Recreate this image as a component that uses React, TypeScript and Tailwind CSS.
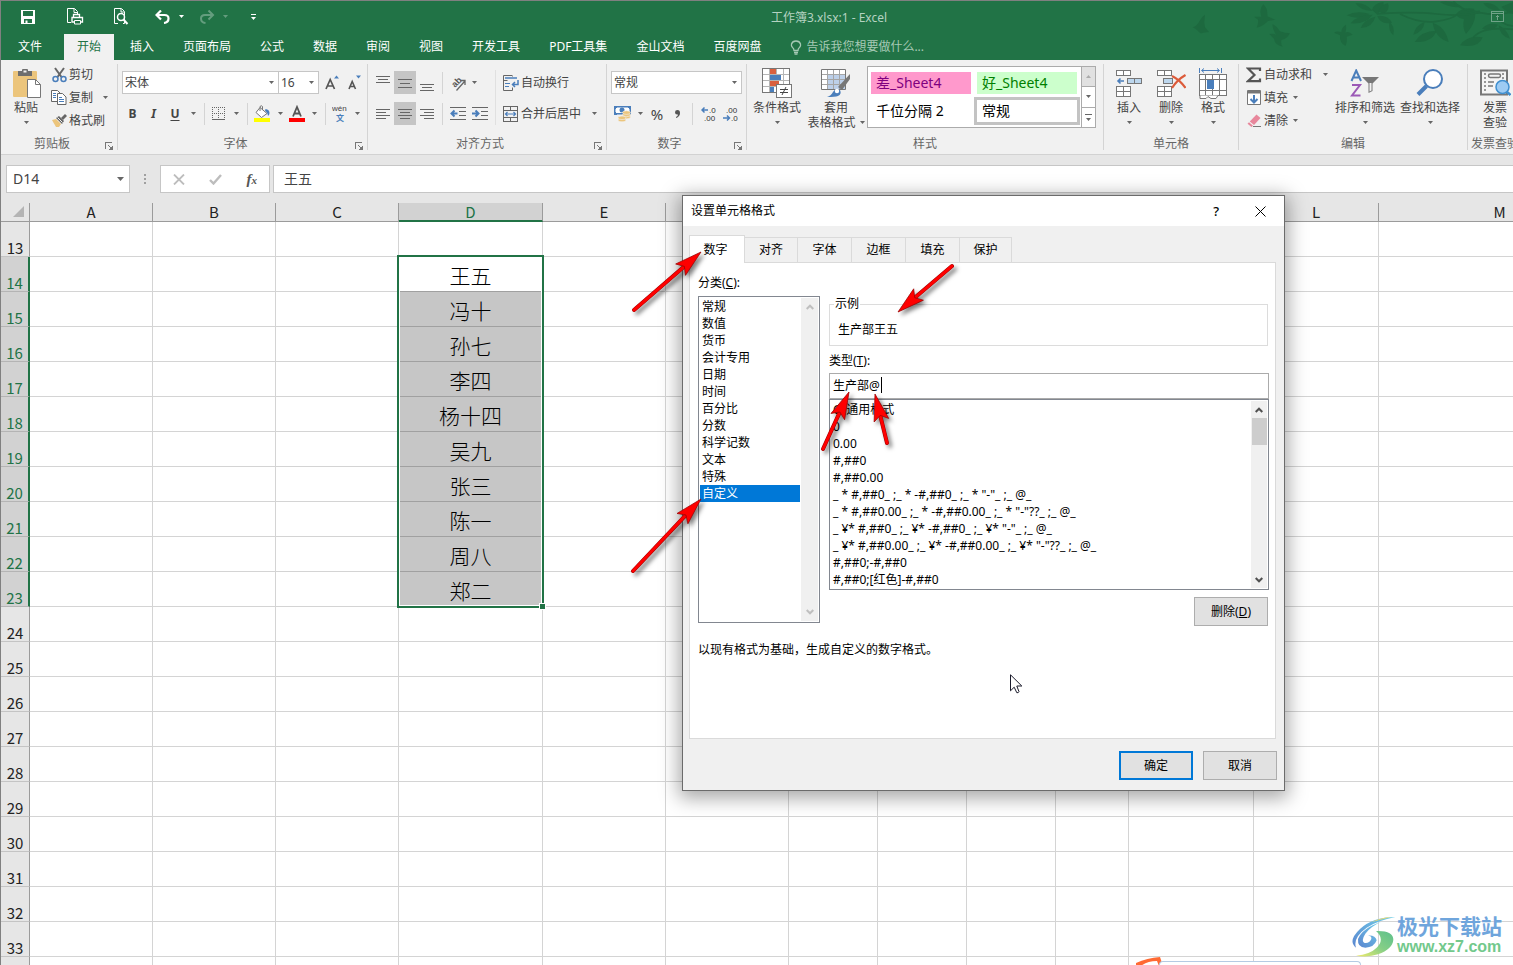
import React, { useState } from 'react';

const tabs = ['插入', '页面布局', '公式', '数据', '审阅', '视图', '开发工具', 'PDF工具集', '金山文档', '百度网盘'];

const columns = [
  { name: 'A', width: 'w-[123px]' },
  { name: 'B', width: 'w-[123px]' },
  { name: 'C', width: 'w-[123px]' },
  { name: 'D', width: 'w-[144px]' },
  { name: 'E', width: 'w-[123px]' },
  { name: 'F', width: 'w-[123px]' },
  { name: 'G', width: 'w-[89px]' },
  { name: 'H', width: 'w-[89px]' },
  { name: 'I', width: 'w-[89px]' },
  { name: 'J', width: 'w-[73px]' },
  { name: 'K', width: 'w-[125px]' },
  { name: 'L', width: 'w-[125px]' },
  { name: 'M', width: 'w-[242px]' },
];

const names: Record<number, string> = {
  14: '王五',
  15: '冯十',
  16: '孙七',
  17: '李四',
  18: '杨十四',
  19: '吴九',
  20: '张三',
  21: '陈一',
  22: '周八',
  23: '郑二',
};

const rows = Array.from({ length: 22 }, (_, i) => i + 13);

const categories = ['常规', '数值', '货币', '会计专用', '日期', '时间', '百分比', '分数', '科学记数', '文本', '特殊', '自定义'];

const formats = [
  'G/通用格式',
  '0',
  '0.00',
  '#,##0',
  '#,##0.00',
  '_ * #,##0_ ;_ * -#,##0_ ;_ * "-"_ ;_ @_ ',
  '_ * #,##0.00_ ;_ * -#,##0.00_ ;_ * "-"??_ ;_ @_ ',
  '_ ¥* #,##0_ ;_ ¥* -#,##0_ ;_ ¥* "-"_ ;_ @_ ',
  '_ ¥* #,##0.00_ ;_ ¥* -#,##0.00_ ;_ ¥* "-"??_ ;_ @_ ',
  '#,##0;-#,##0',
  '#,##0;[红色]-#,##0',
];

/* ---------- small shared pieces ---------- */

const Caret = ({ className = 'text-[#666]' }: { className?: string }) => (
  <svg width="5" height="3" viewBox="0 0 5 3" className={`shrink-0 ${className}`}>
    <path d="M0 0h5L2.5 3z" fill="currentColor" />
  </svg>
);

const CaretButton = ({ label }: { label: string }) => (
  <button aria-label={label} className="flex h-full w-[14px] shrink-0 items-center justify-center">
    <Caret />
  </button>
);

const Divider = ({ className = 'mx-[5px]' }: { className?: string }) => (
  <div className={`h-[22px] w-px shrink-0 bg-[#d4d4d4] ${className}`} />
);

interface GroupProps {
  label: string;
  width: string;
  launcher?: boolean;
  children: React.ReactNode;
}

const Group = ({ label, width, launcher, children }: GroupProps) => (
  <>
    <section aria-label={label} className={`flex shrink-0 flex-col ${width}`}>
      <div className="flex h-[72px] items-start">{children}</div>
      <div className="flex h-[22px] items-center pt-px text-[#666]">
        <span className="flex-1 whitespace-nowrap text-center">{label}</span>
        {launcher && (
          <button aria-label={`${label}设置`} className="flex h-full w-[14px] items-center pl-[2px] pt-1">
            <svg width="8" height="8" viewBox="0 0 8 8" fill="none" stroke="#777" shapeRendering="crispEdges">
              <path d="M.5 7V.5H7M3 3l3 3" />
              <path d="M3.500 7.500h4v-4M5 6.500h2M6.500 5v2" />
            </svg>
          </button>
        )}
      </div>
    </section>
    <div className="my-1 w-px shrink-0 self-stretch bg-[#d4d4d4]" />
  </>
);

interface BigButtonProps {
  icon: React.ReactNode;
  lines: string[];
  width: string;
  inlineCaret?: boolean;
  noCaret?: boolean;
}

const BigButton = ({ icon, lines, width, inlineCaret, noCaret }: BigButtonProps) => (
  <button className={`flex shrink-0 flex-col items-center pt-[7px] ${width}`}>
    <span className="mb-px flex h-8 items-center justify-center">{icon}</span>
    {lines.map((line, i) => (
      <span key={line} className="flex items-center gap-1 whitespace-nowrap leading-[15px]">
        {line}
        {inlineCaret && i === lines.length - 1 && <Caret />}
      </span>
    ))}
    {!inlineCaret && !noCaret && (
      <span className="flex h-[15px] items-center pl-px">
        <Caret />
      </span>
    )}
  </button>
);

const SmallButton = ({ icon, label }: { icon: React.ReactNode; label: string }) => (
  <button className="flex h-[23px] items-center gap-[2px] whitespace-nowrap">
    <span className="flex w-4 justify-center">{icon}</span>
    {label}
  </button>
);

interface IconButtonProps {
  label: string;
  width?: string;
  active?: boolean;
  children: React.ReactNode;
}

const IconButton = ({ label, width = 'w-[22px]', active, children }: IconButtonProps) => (
  <button
    aria-label={label}
    className={`flex h-[23px] shrink-0 items-center justify-center ${width} ${active ? 'bg-[#c5c5c5]' : ''}`}
  >
    {children}
  </button>
);

/* ---------- ribbon icons ---------- */

const PasteIcon = () => (
  <svg width="32" height="30" viewBox="-2 0 32 30">
    <rect x="1" y="3" width="24" height="26" rx="1" fill="#ecc57c" />
    <path d="M6 3h4V2q0-1 1-1h4q1 0 1 1v1h4v5H6z" fill="#6e6e6e" />
    <rect x="11.500" y="2.500" width="3" height="2" fill="#f1f1f1" />
    <path d="M15.500 11.500h8l5 5v13h-13z" fill="#fff" stroke="#777" />
    <path d="M23.500 11.500v5h5" fill="none" stroke="#777" />
  </svg>
);

const CutIcon = () => (
  <svg width="15" height="16" viewBox="0 0 15 16" fill="none">
    <path d="M3 1l6.500 9M12 1L5.500 10" stroke="#666" strokeWidth="2" />
    <circle cx="3.500" cy="12" r="2.500" stroke="#4a7ebb" strokeWidth="1.500" />
    <circle cx="11.500" cy="12" r="2.500" stroke="#4a7ebb" strokeWidth="1.500" />
  </svg>
);

const CopyIcon = () => (
  <svg width="16" height="15" viewBox="0 0 16 15" fill="#fff" stroke="#666">
    <path d="M.5.5h6l3 3v8h-9z" />
    <path d="M2 3.500h3M2 5.500h3M2 7.500h3" stroke="#4a7ebb" />
    <path d="M6.500 3.500h5l3.500 3.500v7.500H6.500z" />
    <path d="M8 7.500h3M8 9.500h5M8 11.500h5" stroke="#4a7ebb" />
  </svg>
);

const BrushIcon = () => (
  <svg width="16" height="15" viewBox="0 0 16 15">
    <path d="M1 7l4-1 5 5-2 3H5z" fill="#ecc57c" />
    <path d="M5 5l3-2 5 5-2 3z" fill="#666" />
    <path d="M10 5l4-4 2 2-4 4z" fill="#666" />
    <path d="M6.500 4.500l5 5" stroke="#f1f1f1" />
  </svg>
);

const BordersIcon = () => (
  <svg width="14" height="14" viewBox="0 0 14 14" stroke="#666" fill="none" shapeRendering="crispEdges">
    <path d="M.5 0v12M6.500 0v12M12.500 0v12M0 .5h13M0 6.500h13" strokeDasharray="1 1" />
    <path d="M0 12.500h13" />
  </svg>
);

const FillIcon = () => (
  <svg width="17" height="17" viewBox="0 0 17 17">
    <path d="M6 2.500l7 6-5.500 4L2 7.500z" fill="#fff" stroke="#777" />
    <path d="M6 6V1.500q1.500-1.500 2.500 0V5" fill="none" stroke="#777" />
    <path d="M11.500 4q4 .5 4 4 0 2-1.500 3-.5-4-3-5z" fill="#4a7ebb" />
    <rect y="13" width="16" height="4" fill="#ff0" />
  </svg>
);

const PhoneticIcon = () => (
  <svg width="16" height="21" viewBox="0 0 16 21">
    <text x="0" y="8" fontSize="8" fill="#444" fontFamily="Liberation Sans, sans-serif">wén</text>
    <text x="4" y="18" fontSize="8" fill="#4a7ebb" fontWeight="700" fontFamily="Noto Sans CJK SC, sans-serif">文</text>
  </svg>
);

const linePaths: Record<string, string> = {
  top: 'M0 1.500h14M2 4.500h10M0 7.500h14',
  middle: 'M0 4.500h14M2 8.500h10M0 12.500h14',
  bottom: 'M0 9.500h14M2 12.500h10M0 15.500h14',
  left: 'M0 3.500h14M0 6.500h10M0 9.500h14M0 12.500h10',
  center: 'M0 3.500h14M2 6.500h10M0 9.500h14M2 12.500h10',
  right: 'M0 3.500h14M4 6.500h10M0 9.500h14M4 12.500h10',
};

const LinesIcon = ({ kind }: { kind: string }) => (
  <svg width="14" height="16" viewBox="0 0 14 16" stroke="#666" shapeRendering="crispEdges">
    <path d={linePaths[kind]} />
  </svg>
);

const IndentIcon = ({ increase }: { increase?: boolean }) => (
  <svg width="16" height="14" viewBox="0 0 16 14" fill="none">
    <path d="M0 .5h16M9 4.500h7M9 8.500h7M0 12.500h16" stroke="#666" shapeRendering="crispEdges" />
    <path d={increase ? 'M0 6.500h6M3.500 3.500l3 3-3 3' : 'M1.500 6.500H7.500M4.500 3.500l-3 3 3 3'} stroke="#4a7ebb" strokeWidth="2" />
  </svg>
);

const OrientationIcon = () => (
  <svg width="17" height="16" viewBox="0 0 17 16">
    <text x="6" y="13" fontSize="9" fontWeight="700" fill="#555" transform="rotate(-45 6 13)" fontFamily="Liberation Sans, sans-serif">ab</text>
    <path d="M7.500 15.500l8-9M11.500 5.500h4.500V10" fill="none" stroke="#666" strokeWidth="1.300" />
  </svg>
);

const WrapIcon = () => (
  <svg width="16" height="16" viewBox="0 0 16 16" fill="none">
    <path d="M9 .5H.5v15h9v-3M9.500.5v1M.5 5.500h4" stroke="#666" />
    <path d="M2 3h12" stroke="#4a7ebb" strokeWidth="1.500" />
    <path d="M2 8.500h5M2 11.500h4" stroke="#4a7ebb" />
    <path d="M15 5v4.500H9.500M12 7l-2.500 2.500L12 12" stroke="#4a7ebb" strokeWidth="1.500" />
  </svg>
);

const MergeIcon = () => (
  <svg width="16" height="16" viewBox="0 0 16 16" fill="none">
    <path d="M.5.5h14v15H.5zM.5 4.500h14M.5 11.500h14M7.500.5v4M7.500 11.500v4" stroke="#666" shapeRendering="crispEdges" />
    <path d="M2.500 8h10M4.500 6l-2 2 2 2M10.500 6l2 2-2 2" stroke="#4a7ebb" strokeWidth="1.200" />
  </svg>
);

const CurrencyIcon = () => (
  <svg width="17" height="17" viewBox="0 0 17 17">
    <path d="M.75 1.750h15.500v7H.75z" fill="#fff" stroke="#4a7ebb" strokeWidth="1.500" />
    <circle cx="8" cy="5" r="2.500" fill="#4a7ebb" />
    <path d="M0 1h3v2H2v1H0zM14 1h3v3h-2V3h-1zM0 7h2v1h1v2H0z" fill="#4a7ebb" />
    <g fill="#ecc57c" stroke="#f1f1f1" strokeWidth=".6">
      <ellipse cx="12.500" cy="12" rx="4" ry="1.800" />
      <ellipse cx="12.500" cy="9.800" rx="4" ry="1.800" />
      <ellipse cx="12.500" cy="7.600" rx="4" ry="1.800" />
      <ellipse cx="8" cy="15" rx="4" ry="1.800" />
      <ellipse cx="8" cy="12.800" rx="4" ry="1.800" />
    </g>
  </svg>
);

const DecimalIcon = ({ decrease }: { decrease?: boolean }) => (
  <svg width="16" height="18" viewBox="0 0 16 18" fontFamily="Liberation Sans, sans-serif" fontSize="8" fill="#333">
    <text x={decrease ? 3 : 8} y="8">{decrease ? '.00' : '.0'}</text>
    <text x={decrease ? 8 : 3} y="16">{decrease ? '.0' : '.00'}</text>
    <path
      d={decrease ? 'M0 13h6M4 10.500L6.500 13 4 15.500' : 'M1 5h6M3.500 2.500L1 5l2.500 2.500'}
      fill="none"
      stroke="#4a7ebb"
      strokeWidth="1.500"
    />
  </svg>
);

const ConditionalIcon = () => (
  <svg width="30" height="30" viewBox="0 0 30 30" shapeRendering="crispEdges">
    <path d="M.5.5h27v24H.5z" fill="#fff" stroke="#777" />
    <path d="M7.500 1v23M14.500 1v23M21.500 1v23M1 6.500h26M1 12.500h26M1 18.500h26" stroke="#b5b5b5" />
    <rect x="8" y="1" width="6" height="5" fill="#d9603f" />
    <rect x="8" y="7" width="11" height="5" fill="#4a7ebb" />
    <rect x="8" y="13" width="9" height="5" fill="#d9603f" />
    <rect x="8" y="19" width="4" height="5" fill="#4a7ebb" />
    <path d="M14.500 16.500h15v13h-15z" fill="#fff" stroke="#777" />
    <path d="M18 21.500h8M18 24.500h8M24 19l-4 8" stroke="#444" shapeRendering="auto" />
  </svg>
);

const TableFormatIcon = () => (
  <svg width="30" height="28" viewBox="0 0 30 28">
    <path d="M.5.5h24v20H.5z" fill="#fff" stroke="#777" />
    <rect x="7" y="6" width="17" height="14" fill="#bdd0e9" />
    <path d="M6.500 1v19M12.500 1v19M18.500 1v19M1 5.500h23M1 10.500h23M1 15.500h23" stroke="#a5a5a5" />
    <path d="M29 5v5l-8 11-4-3z" fill="#777" />
    <path d="M6 28q4-1 6-5 3-5 7-2 2 4-2 6-3 1-11 1z" fill="#4a7ebb" />
    <circle cx="16" cy="22" r="2.200" fill="#fff" />
  </svg>
);

const InsertIcon = () => (
  <svg width="28" height="28" viewBox="0 0 28 28" fill="#fff" stroke="#777" shapeRendering="crispEdges">
    <path d="M1.500 1.500h14v5h-14zM8.500 1.500v5M1.500 17.500h14v10h-14zM8.500 17.500v10M1.500 22.500h14" />
    <path d="M12.500 9.500h14v5h-14zM19.500 9.500v5" fill="#bdd7ee" />
    <path d="M3 12h6M5.500 9.500L3 12l2.500 2.500" fill="none" stroke="#4a7ebb" strokeWidth="1.600" shapeRendering="auto" />
  </svg>
);

const DeleteIcon = () => (
  <svg width="30" height="28" viewBox="-1 0 30 28" fill="#fff" stroke="#777" shapeRendering="crispEdges">
    <path d="M.5 1.500h14v5H.5zM7.500 1.500v5M.5 17.500h14v10H.5zM7.500 17.500v10M.5 22.500h14" />
    <path d="M6.500 9.500h9v5h-9z" fill="#bdd7ee" />
    <path d="M15 7q8 4 13.500 12M28.500 6Q20 11 15 19" fill="none" stroke="#dc5b3a" strokeWidth="2.200" shapeRendering="auto" />
  </svg>
);

const FormatIcon = () => (
  <svg width="28" height="31" viewBox="0 0 28 31" fill="#fff" stroke="#777" shapeRendering="crispEdges">
    <path d="M.5 6.500h27v21H.5zM6.500 6.500v21M13.500 6.500v21M20.500 6.500v21M.5 11.500h27M.5 22.500h27" />
    <rect x="8" y="12" width="7" height="9" fill="#4a7ebb" stroke="none" />
    <path d="M.5 0v5M22.500 0v5" stroke="#4a7ebb" />
    <path d="M3 2.500h17M5 .5l-2.500 2L5 4.500M18 .5l2.500 2-2.500 2" fill="none" stroke="#4a7ebb" shapeRendering="auto" />
    <path d="M1 27.500v3h6l2-2 3 2h5l2-3" shapeRendering="auto" />
  </svg>
);

const SigmaIcon = () => (
  <svg width="16" height="16" viewBox="0 0 16 16" fill="none" stroke="#555" strokeWidth="2.200">
    <path d="M14 4V1.500H2L8.500 8 2 14.200h12V11.500" />
  </svg>
);

const FillDownIcon = () => (
  <svg width="14" height="15" viewBox="0 0 14 15" fill="none">
    <path d="M.5.5h13v14H.5z" fill="#fff" stroke="#777" />
    <path d="M1 2h12" stroke="#777" strokeWidth="3" />
    <path d="M7 5v7.500M3.500 9L7 12.500 10.500 9" stroke="#4a7ebb" strokeWidth="2" />
  </svg>
);

const EraserIcon = () => (
  <svg width="15" height="14" viewBox="0 0 15 14">
    <path d="M9.500.5L13.500 4 7 11 2.800 7.500z" fill="#e8879c" />
    <path d="M2 8.300l4 3.500L4.500 13 .5 9.800z" fill="#e8879c" />
    <path d="M6 12.500h8" stroke="#777" />
  </svg>
);

const SortIcon = () => (
  <svg width="30" height="28" viewBox="0 0 30 28" fill="none">
    <path d="M1.500 12L6.200 1.500 11 12M3 8.500h6.500" stroke="#4a7ebb" strokeWidth="2" />
    <path d="M2 16h8L2 26.500h8.500" stroke="#9b59b6" strokeWidth="2" />
    <path d="M12 8h17l-6.500 6.500V22l-4 2v-9.500z" fill="#777" />
    <path d="M19.500 14h2v7.500l-2 1z" fill="#f1f1f1" />
  </svg>
);

const SearchIcon = () => (
  <svg width="28" height="28" viewBox="0 0 28 28" stroke="#4a7ebb">
    <path d="M10.500 17L2 25.500" strokeWidth="4" />
    <circle cx="17" cy="10" r="9" fill="#fff" strokeWidth="2" />
  </svg>
);

const InvoiceIcon = () => (
  <svg width="31" height="28" viewBox="0 0 31 28" fill="none">
    <path d="M1 1.500h26v24H1z" stroke="#777" strokeWidth="2" fill="#f4f4f4" />
    <path d="M5 4v20M23 4v8" stroke="#777" strokeWidth="1.500" strokeDasharray="2 2" />
    <rect x="8.500" y="5" width="12" height="3.500" rx="1.700" stroke="#777" strokeWidth="1.500" />
    <path d="M8 13h6M8 17h5" stroke="#777" strokeWidth="1.500" />
    <circle cx="22.500" cy="18" r="6.500" fill="#9dcbf3" stroke="#3f8fd0" strokeWidth="1.500" />
    <path d="M27 23l3.500 3" stroke="#3f8fd0" strokeWidth="2.500" />
  </svg>
);

/* ---------- title bar ---------- */

const TitleArt = () => (
  <svg
    className="pointer-events-none absolute right-0 top-0 text-[#1d693f]"
    width="323"
    height="60"
    viewBox="270 3 969 180"
    fill="currentColor"
    stroke="currentColor"
  >
    <g stroke="none">
      <path d="M278 82q14-4 20-18 6-14 17-20-4 22 0 38l12 14-18 2q-8 4-12-2-10-10-19-14z" />
      <path d="M462 50l22 0q-8-24 6-37 14 12 12 36l24 10-22 4q-14 16-34 20 6-14 4-24z" />
      <path d="M508 102q14-2 20 2-12-20-10-32 12 6 22 22 14 6 30 6-10 18-26 20-2 14 4 20-24-6-26-24z" />
      <path d="M702 98q8-6 22-2 0-14 14-22 2 16-2 24 10-6 22 6l-18 6q2 18-4 28-18-10-16-32z" />
      <path d="M766 10q30-4 52 22-34 2-52-22z" />
      <path d="M740 46q30-16 70-4-34 20-70 4z" />
      <path d="M752 70q20-26 66-26-22 30-66 26z" />
      <path d="M782 84q10-26 44-34-8 32-44 34z" />
      <path d="M816 30q4-20 34-24 6 24-20 36z" />
      <path d="M836 34q6-20 28-24 8 20-14 32z" />
      <path d="M832 48q30-4 44 20-34 8-44-20z" />
      <path d="M868 66q18 12 12 40-16-14-12-40z" />
      <path d="M944 126q20-34 66-34-14 36-66 34z" />
      <path d="M998 68q38 12 48 58-42-14-48-58z" />
      <path d="M974 66q-4 30-34 38 6-28 34-38z" />
      <path d="M1066 44q20-24 56-18 14 32-24 76-12-20-6-44-16-4-26-14z" />
      <path d="M1020 6q30-8 66 14-36 6-66-14z" />
      <path d="M1080 136q22-32 68-24-12 34-68 24z" />
      <path d="M1146 86q20-22 48-12-16 24-48 12z" />
      <path d="M1196 76q24 10 34 40-30-6-34-40z" />
      <path d="M1150 10q30-6 50 20-34 4-50-20z" />
      <path d="M1204 20l35-14v36q-20-4-35-22z" />
    </g>
    <path
      d="M830 42q110-8 180 0t130-4q50 10 99-2M900 42q60 30 110 22t60-20M1120 112q30-34 119-24M1060 4q30 34 80 30M1190 44q10 30 49 34"
      fill="none"
      strokeWidth="5"
    />
  </svg>
);

const TitleBar = () => (
  <header className="relative bg-[#217346] text-white">
    <TitleArt />
    <div className="relative flex h-[33px] items-center pb-[2px]">
      <div className="flex w-[270px] shrink-0 items-center pl-5">
        <button aria-label="保存" className="w-[46px]">
          <svg width="14" height="14" viewBox="0 0 14 14" fill="#fff">
            <path fillRule="evenodd" d="M0 0h14v14H0zM2 1v5h10V1zM3 9v4h1.500v-2.500h2V13H11V9z" />
          </svg>
        </button>
        <button aria-label="快速打印" className="w-[46px]">
          <svg width="17" height="17" viewBox="0 0 17 17" fill="none" stroke="#fff">
            <path d="M4 14.500H.5V.5h7l3 3v3" />
            <path d="M7 1v3.500h3" />
            <path d="M6.500 9.500V6.500h6v3M5 9.500h10.500v4.500H5z" strokeWidth="1.300" />
            <path d="M7.500 12.500h6v3.500h-6z" fill="#217346" />
          </svg>
        </button>
        <button aria-label="打印预览" className="w-[42px]">
          <svg width="16" height="17" viewBox="0 0 16 17" fill="none" stroke="#fff">
            <path d="M5 15.500H1.500V.5h7l3 3V15.500H10" />
            <path d="M8 1v3h3" />
            <circle cx="8" cy="9" r="3.500" strokeWidth="1.500" fill="#217346" />
            <path d="M10.500 11.500l4 4.500" strokeWidth="2" />
          </svg>
        </button>
        <button aria-label="撤消" className="flex w-[44px] items-center gap-2">
          <svg width="16" height="14" viewBox="0 0 16 14" fill="none" stroke="#fff" strokeWidth="2.200">
            <path d="M6 .5L1.500 5 6 9.500M2 5h7.500q4 0 4 3.500 0 4-4.500 4.500" />
          </svg>
          <Caret className="text-white" />
        </button>
        <button aria-label="恢复" className="flex w-[52px] items-center gap-2 opacity-30">
          <svg width="16" height="14" viewBox="0 0 16 14" fill="none" stroke="#fff" strokeWidth="2">
            <path d="M9.500.5L14 5 9.500 9.500M13.500 5H6Q2 5 2 8.500q0 4 4.500 4.500" />
          </svg>
          <Caret className="text-white" />
        </button>
        <button aria-label="自定义快速访问工具栏" className="flex flex-col items-center gap-[2px]">
          <span className="h-px w-[5px] bg-white" />
          <Caret className="text-white" />
        </button>
      </div>
      <h1 className="flex-1 pt-[2px] text-center text-[#b4d2c1]">工作簿3.xlsx:1 - Excel</h1>
      <div className="flex w-[126px] shrink-0 justify-end pr-[9px]">
        <button aria-label="功能区显示选项">
          <svg width="13" height="11" viewBox="0 0 13 11" fill="none" stroke="#6fa388" shapeRendering="crispEdges">
            <path d="M.5.5h12v9.500H.5zM1 2.500h11M6.500 9V4.500M4.500 6.500l2-2 2 2" />
          </svg>
        </button>
      </div>
    </div>
    <nav className="relative flex h-[26px] items-center">
      <button className="h-full w-[63px] shrink-0 pr-[5px] text-center">文件</button>
      <button className="h-full shrink-0 bg-[#f1f1f1] px-[13px] text-[#217346]">开始</button>
      <span className="w-[2px]" />
      {tabs.map((tab) => (
        <button key={tab} className="mr-px h-full shrink-0 px-[14px]">
          {tab}
        </button>
      ))}
      <label className="flex items-center gap-1 pl-[14px] text-[#a6c9b5]">
        <svg width="12" height="15" viewBox="0 0 12 15" fill="none" stroke="currentColor" strokeWidth="1.300">
          <path d="M4 10.500Q4 8.500 2.500 7.500 1 6 1.500 4 2.500 1 6 1t4.500 3q.5 2-1 3.500Q8 8.500 8 10.500zM4 12.500h4M4.500 14.200h3" />
        </svg>
        <input placeholder="告诉我您想要做什么..." className="w-40 bg-transparent outline-none placeholder:text-[#a6c9b5]" />
      </label>
    </nav>
  </header>
);

/* ---------- ribbon ---------- */

interface BoxSelectProps {
  label: string;
  value: string;
  width: string;
}

const BoxSelect = ({ label, value, width }: BoxSelectProps) => (
  <div className={`relative h-[23px] shrink-0 ${width}`}>
    <select aria-label={label} className="h-full w-full appearance-none border border-[#c6c6c6] bg-white px-[2px] text-[#444]">
      <option>{value}</option>
    </select>
    <Caret className="pointer-events-none absolute right-[5px] top-[10px] text-[#666]" />
  </div>
);

const Ribbon = () => (
  <div className="flex overflow-hidden border-b border-[#d2d2d2] bg-[#f1f1f1] text-[#444]">
    <Group label="剪贴板" width="w-[116px]" launcher>
      <div className="ml-1 flex">
        <BigButton icon={<PasteIcon />} lines={['粘贴']} width="w-[42px]" />
      </div>
      <div className="ml-1 pt-[3px]">
        <SmallButton icon={<CutIcon />} label="剪切" />
        <div className="flex h-[23px] items-center gap-[5px]">
          <SmallButton icon={<CopyIcon />} label="复制" />
          <CaretButton label="复制选项" />
        </div>
        <SmallButton icon={<BrushIcon />} label="格式刷" />
      </div>
    </Group>

    <Group label="字体" width="w-[249px]" launcher>
      <div className="flex flex-col gap-2 pl-1 pt-[11px]">
        <div className="flex">
          <BoxSelect label="字体" value="宋体" width="w-[157px]" />
          <BoxSelect label="字号" value="16" width="-ml-px w-[41px]" />
          <IconButton label="增大字号" width="w-[26px]">
            <svg width="14" height="16" viewBox="0 0 14 16" fill="none">
              <path d="M1 14L5.200 4.500 9.500 14M2.500 11h5.500" stroke="#555" strokeWidth="1.700" />
              <path d="M9 3.500h5L11.500.5z" fill="#4a7ebb" />
            </svg>
          </IconButton>
          <IconButton label="减小字号" width="w-[18px]">
            <svg width="14" height="16" viewBox="0 0 14 16" fill="none">
              <path d="M2 14l3.200-7.500L8.500 14M3.500 11.500H7" stroke="#555" strokeWidth="1.600" />
              <path d="M9 .5h5l-2.500 3z" fill="#4a7ebb" />
            </svg>
          </IconButton>
        </div>
        <div className="flex items-center">
          <IconButton label="加粗" width="w-[21px]"><b>B</b></IconButton>
          <IconButton label="倾斜" width="w-[21px]"><b className="italic">I</b></IconButton>
          <IconButton label="下划线" width="w-[22px]"><b className="underline underline-offset-2">U</b></IconButton>
          <CaretButton label="下划线选项" />
          <Divider className="mx-1" />
          <IconButton label="边框" width="w-[20px]"><BordersIcon /></IconButton>
          <CaretButton label="边框选项" />
          <Divider className="mx-1" />
          <IconButton label="填充颜色" width="w-[21px]"><FillIcon /></IconButton>
          <CaretButton label="填充颜色选项" />
          <IconButton label="字体颜色" width="w-[20px]">
            <svg width="16" height="17" viewBox="0 0 16 17" fill="none">
              <path d="M4 11.500L8 2l4 9.500M5.500 8.500h5" stroke="#555" strokeWidth="1.800" />
              <path d="M0 13h16v4H0z" fill="#f00" />
            </svg>
          </IconButton>
          <CaretButton label="字体颜色选项" />
          <Divider className="mx-1" />
          <IconButton label="拼音" width="w-[20px]"><PhoneticIcon /></IconButton>
          <CaretButton label="拼音选项" />
        </div>
      </div>
    </Group>

    <Group label="对齐方式" width="w-[238px]" launcher>
      <div className="flex w-[127px] flex-col gap-2 pl-1 pt-[11px]">
        <div className="flex items-center">
          <IconButton label="顶端对齐"><LinesIcon kind="top" /></IconButton>
          <IconButton label="垂直居中" active><LinesIcon kind="middle" /></IconButton>
          <IconButton label="底端对齐"><LinesIcon kind="bottom" /></IconButton>
          <Divider className="mx-1" />
          <IconButton label="方向" width="w-[20px]"><OrientationIcon /></IconButton>
          <CaretButton label="方向选项" />
        </div>
        <div className="flex items-center">
          <IconButton label="左对齐"><LinesIcon kind="left" /></IconButton>
          <IconButton label="居中" active><LinesIcon kind="center" /></IconButton>
          <IconButton label="右对齐"><LinesIcon kind="right" /></IconButton>
          <Divider className="mx-1" />
          <IconButton label="减少缩进量"><IndentIcon /></IconButton>
          <IconButton label="增加缩进量"><IndentIcon increase /></IconButton>
        </div>
      </div>
      <div className="mt-[10px] h-[55px] w-px bg-[#e0e0e0]" />
      <div className="flex flex-col gap-2 pl-[7px] pt-[11px]">
        <SmallButton icon={<WrapIcon />} label="自动换行" />
        <div className="flex h-[23px] items-center gap-[6px]">
          <SmallButton icon={<MergeIcon />} label="合并后居中" />
          <CaretButton label="合并选项" />
        </div>
      </div>
    </Group>

    <Group label="数字" width="w-[139px]" launcher>
      <div className="flex flex-col gap-2 pl-1 pt-[11px]">
        <BoxSelect label="数字格式" value="常规" width="w-[131px]" />
        <div className="flex items-center">
          <IconButton label="会计数字格式"><CurrencyIcon /></IconButton>
          <CaretButton label="会计格式选项" />
          <IconButton label="百分比样式" width="w-[20px]"><span className="text-[15px]">%</span></IconButton>
          <IconButton label="千位分隔样式" width="w-[20px]">
            <svg width="5" height="8" viewBox="0 0 5 8">
              <path d="M2.500 0Q5 0 5 3 5 6.500 1 8V7Q3 6 3 4.500 0 5 0 2.300 0 0 2.500 0z" fill="#555" />
            </svg>
          </IconButton>
          <Divider />
          <IconButton label="增加小数位数"><DecimalIcon /></IconButton>
          <IconButton label="减少小数位数"><DecimalIcon decrease /></IconButton>
        </div>
      </div>
    </Group>

    <Group label="样式" width="w-[356px]">
      <BigButton icon={<ConditionalIcon />} lines={['条件格式']} width="w-[60px]" />
      <BigButton icon={<TableFormatIcon />} lines={['套用', '表格格式']} width="w-[58px]" inlineCaret />
      <div className="ml-[2px] mt-[6px] flex h-[62px] w-[229px] border border-[#ababab] bg-white text-sm leading-[22px]">
        <div className="grid flex-1 grid-cols-2 content-start gap-[6px] pl-[3px] pr-1 pt-[5px]">
          <button className="h-[22px] bg-[#ff99cc] pl-[5px] text-left text-[#800080]">差_Sheet4</button>
          <button className="h-[22px] bg-[#ccffcc] pl-[5px] text-left text-[#008000]">好_Sheet4</button>
          <button className="h-[22px] pl-[5px] text-left text-black">千位分隔 2</button>
          <button className="-mx-[3px] -my-[3px] h-7 border-[3px] border-[#c3c3c3] pl-[5px] text-left text-black">常规</button>
        </div>
        <div className="flex w-[14px] flex-col border-l border-[#ababab]">
          <button aria-label="上一行" className="flex flex-1 items-center justify-center bg-[#e1e1e1]">
            <Caret className="rotate-180 text-[#ababab]" />
          </button>
          <button aria-label="下一行" className="flex flex-1 items-center justify-center border-y border-[#ababab]">
            <Caret />
          </button>
          <button aria-label="其他" className="flex flex-1 flex-col items-center justify-center gap-[3px]">
            <span className="h-px w-[7px] bg-[#666]" />
            <Caret />
          </button>
        </div>
      </div>
    </Group>

    <Group label="单元格" width="w-[134px]">
      <div className="flex pl-1">
        <BigButton icon={<InsertIcon />} lines={['插入']} width="w-[42px]" />
        <BigButton icon={<DeleteIcon />} lines={['删除']} width="w-[42px]" />
        <BigButton icon={<FormatIcon />} lines={['格式']} width="w-[42px]" />
      </div>
    </Group>

    <Group label="编辑" width="w-[228px]">
      <div className="w-[93px] pl-[7px] pt-[3px]">
        <div className="flex h-[23px] items-center gap-[6px]">
          <SmallButton icon={<SigmaIcon />} label="自动求和" />
          <CaretButton label="求和选项" />
        </div>
        <div className="flex h-[23px] items-center">
          <SmallButton icon={<FillDownIcon />} label="填充" />
          <CaretButton label="填充选项" />
        </div>
        <div className="flex h-[23px] items-center">
          <SmallButton icon={<EraserIcon />} label="清除" />
          <CaretButton label="清除选项" />
        </div>
      </div>
      <BigButton icon={<SortIcon />} lines={['排序和筛选']} width="w-[66px]" />
      <BigButton icon={<SearchIcon />} lines={['查找和选择']} width="w-[64px]" />
    </Group>

    <Group label="发票查验" width="w-[54px]">
      <BigButton icon={<InvoiceIcon />} lines={['发票', '查验']} width="w-[54px]" noCaret />
    </Group>
  </div>
);

/* ---------- formula bar and grid ---------- */

const FormulaBar = () => (
  <div className="flex bg-[#e6e6e6] pb-[10px] pl-[5px] pt-[10px] text-sm text-[#444]">
    <div className="flex h-7 w-[124px] shrink-0 items-center border border-[#c6c6c6] bg-white pr-[5px]">
      <input aria-label="名称框" defaultValue="D14" className="w-full min-w-0 pl-[6px] outline-none" />
      <button aria-label="名称列表">
        <svg width="7" height="4" viewBox="0 0 7 4"><path d="M0 0h7L3.500 4z" fill="#666" /></svg>
      </button>
    </div>
    <svg width="30" height="28" viewBox="0 0 30 28" fill="#a0a0a0" className="shrink-0">
      <path d="M14 9h2v2h-2zM14 13h2v2h-2zM14 17h2v2h-2z" />
    </svg>
    <div className="flex h-7 w-[110px] shrink-0 items-center justify-around border border-[#c6c6c6] bg-white">
      <button aria-label="取消输入">
        <svg width="12" height="11" viewBox="0 0 12 11" stroke="#bdbdbd" strokeWidth="1.800"><path d="M1 .5l10 10M11 .5l-10 10" /></svg>
      </button>
      <button aria-label="输入">
        <svg width="13" height="11" viewBox="0 0 13 11" fill="none" stroke="#bdbdbd" strokeWidth="2.400"><path d="M1 6l3.500 3.500L12 1" /></svg>
      </button>
      <button aria-label="插入函数" className="font-['Liberation_Serif',serif] text-[15px] font-bold italic leading-4 text-[#555]">
        f<span className="text-[11px]">x</span>
      </button>
    </div>
    <input
      aria-label="编辑栏"
      defaultValue="王五"
      className="ml-[3px] h-7 min-w-0 flex-1 border border-r-0 border-[#c6c6c6] bg-white pb-[2px] pl-[10px] outline-none"
    />
  </div>
);

const Sheet = () => (
  <div className="min-h-0 flex-1 overflow-hidden bg-white">
    <table className="w-[1620px] table-fixed border-separate border-spacing-0 font-['Noto_Sans_CJK_SC',sans-serif] text-[15px] leading-4">
      <colgroup>
        <col className="w-[29px]" />
        {columns.map((col) => (
          <col key={col.name} className={col.width} />
        ))}
      </colgroup>
      <thead>
        <tr className="h-[19px] bg-[#e6e6e6] text-[#222]">
          <th aria-label="全选" className="border-b border-r border-[#9b9b9b] p-0">
            <svg width="12" height="12" viewBox="0 0 12 12" className="ml-auto mr-1"><path d="M11 0v11H0z" fill="#b4b4b4" /></svg>
          </th>
          {columns.map((col) => (
            <th
              key={col.name}
              scope="col"
              className={`p-0 font-normal ${
                col.name === 'D'
                  ? 'border-b-2 border-r border-b-[#217346] border-r-[#9b9b9b] bg-[#d2d2d2] text-[#217346]'
                  : 'border-b border-r border-[#9b9b9b]'
              }`}
            >
              {col.name}
            </th>
          ))}
        </tr>
      </thead>
      <tbody>
        {rows.map((row) => {
          const inSelection = row >= 14 && row <= 23;
          return (
            <tr key={row} className="h-[35px]">
              <th
                scope="row"
                className={`border-b p-0 align-bottom font-normal ${
                  inSelection
                    ? 'border-b-[#b4b4b4] border-r-2 border-r-[#217346] bg-[#d2d2d2] text-[#217346]'
                    : 'border-b-[#c4c4c4] border-r border-r-[#9b9b9b] bg-[#e6e6e6] text-[#222]'
                }`}
              >
                {row}
              </th>
              {columns.map((col) => {
                const selected = inSelection && col.name === 'D';
                return (
                  <td
                    key={col.name}
                    className={`border-b border-r p-0 text-center ${
                      selected
                        ? `relative border-b-[#a0a0a0] border-r-[#d4d4d4] pt-[2px] text-[21px] font-light leading-6 text-black ${row === 14 ? '' : 'bg-[#c6c6c6]'}`
                        : 'border-[#d4d4d4]'
                    }`}
                  >
                    {selected ? names[row] : null}
                    {row === 14 && selected && (
                      <div className="pointer-events-none absolute -left-[2px] -top-[2px] z-10 h-[353px] w-[147px] border-2 border-[#217346] shadow-[inset_0_0_0_1px_white]">
                        <div className="absolute -bottom-[4px] -right-[4px] size-[7px] border border-white bg-[#217346]" />
                      </div>
                    )}
                  </td>
                );
              })}
            </tr>
          );
        })}
      </tbody>
    </table>
  </div>
);

/* ---------- format cells dialog ---------- */

const Chevron = ({ down, color }: { down?: boolean; color: string }) => (
  <svg width="8" height="6" viewBox="0 0 8 6" fill="none" strokeWidth="2" className={`${color} ${down ? 'rotate-180' : ''}`}>
    <path d="M.7 5L4 1.700 7.300 5" stroke="currentColor" />
  </svg>
);

const dialogTabs = [
  { name: '对齐', width: 'w-[53px]' },
  { name: '字体', width: 'w-[54px]' },
  { name: '边框', width: 'w-[54px]' },
  { name: '填充', width: 'w-[54px]' },
  { name: '保护', width: 'w-[52px]' },
];

const FormatDialog = () => {
  const [category, setCategory] = useState('自定义');
  const [format, setFormat] = useState('生产部@');

  return (
    <div
      role="dialog"
      aria-labelledby="dialog-title"
      className="absolute left-[681px] top-[194px] z-20 w-[603px] border border-[#6b6b6b] bg-[#f0f0f0] leading-4 text-black shadow-[0_4px_18px_3px_rgba(0,0,0,0.35)]"
    >
      <div className="flex h-[30px] items-center bg-white pl-2 pr-[18px]">
        <h2 id="dialog-title" className="flex-1">设置单元格格式</h2>
        <button aria-label="帮助" className="mr-9 text-[13px] font-medium">?</button>
        <button aria-label="关闭">
          <svg width="11" height="11" viewBox="0 0 11 11" stroke="#000"><path d="M.5.5l10 10M10.500.5l-10 10" /></svg>
        </button>
      </div>

      <div className="pl-[6px] pr-2 pt-[9px]">
        <div role="tablist" className="flex items-end">
          <button role="tab" aria-selected className="relative -mb-px h-7 w-14 border border-b-0 border-[#dadada] bg-white pr-[3px]">
            数字
          </button>
          {dialogTabs.map((tab) => (
            <button key={tab.name} role="tab" className={`h-[25px] border border-b-0 border-l-0 border-[#dadada] ${tab.width}`}>
              {tab.name}
            </button>
          ))}
        </div>

        <div className="h-[477px] border border-[#dadada] bg-white pl-2 pr-[6px] pt-3">
          <div className="flex">
            <div className="w-[122px]">
              <div id="category-label">
                分类(<u>C</u>):
              </div>
              <div className="mt-[5px] flex h-[327px] border border-[#828790] p-px">
                <ul role="listbox" aria-labelledby="category-label" className="flex-1">
                  {categories.map((item) => (
                    <li
                      key={item}
                      role="option"
                      aria-selected={item === category}
                      onClick={() => setCategory(item)}
                      className={`h-[17px] pl-[2px] leading-[17px] ${item === category ? 'bg-[#0078d7] text-white' : ''}`}
                    >
                      {item}
                    </li>
                  ))}
                </ul>
                <div className="ml-px flex w-[17px] flex-col items-center justify-between bg-[#f0f0f0] py-[6px]">
                  <Chevron color="text-[#bfbfbf]" />
                  <Chevron down color="text-[#bfbfbf]" />
                </div>
              </div>
            </div>

            <div className="ml-[9px] flex min-w-0 flex-1 flex-col pt-[21px]">
              <fieldset className="mr-px h-[50px] min-w-0 border border-[#dcdcdc] pl-[4px]">
                <legend className="px-px">示例</legend>
                <div className="pl-1 pt-[10px]">生产部王五</div>
              </fieldset>
              <label htmlFor="format-type" className="mt-[7px]">
                类型(<u>T</u>):
              </label>
              <div className="relative mt-1">
                <input
                  id="format-type"
                  value={format}
                  onChange={(e) => setFormat(e.target.value)}
                  className="block h-[26px] w-full border border-[#ababab] pb-[3px] pl-[3px] outline-none"
                />
                <span className="absolute left-[52px] top-1 h-4 w-px bg-black" />
              </div>
              <div className="flex h-[191px] border border-[#828790] p-px">
                <ul role="listbox" aria-label="数字格式" className="flex-1">
                  {formats.map((item) => (
                    <li
                      key={item}
                      role="option"
                      aria-selected={false}
                      onClick={() => setFormat(item)}
                      className="h-[17px] whitespace-pre pl-[2px] leading-[17px]"
                    >
                      {item}
                    </li>
                  ))}
                </ul>
                <div className="flex w-4 flex-col items-center bg-[#f0f0f0]">
                  <span className="flex h-[17px] items-center">
                    <Chevron color="text-[#505050]" />
                  </span>
                  <span className="h-[27px] w-[15px] bg-[#cdcdcd]" />
                  <span className="mt-auto flex h-[17px] items-center">
                    <Chevron down color="text-[#505050]" />
                  </span>
                </div>
              </div>
              <button className="mr-px mt-[7px] h-[29px] w-[74px] self-end border border-[#adadad] bg-[#e1e1e1]">
                删除(<u>D</u>)
              </button>
            </div>
          </div>
          <p className="mt-4">以现有格式为基础，生成自定义的数字格式。</p>
        </div>
      </div>

      <div className="flex justify-end gap-[10px] pb-[10px] pr-[7px] pt-3">
        <button className="h-[29px] w-[74px] border-2 border-[#0078d7] bg-[#e1e1e1]">确定</button>
        <button className="h-[29px] w-[74px] border border-[#adadad] bg-[#e1e1e1]">取消</button>
      </div>
    </div>
  );
};

/* ---------- annotations over the page ---------- */

const arrows = [
  { x1: 634, y1: 310, x2: 701, y2: 252 },
  { x1: 952, y1: 266, x2: 898, y2: 312 },
  { x1: 823, y1: 449, x2: 849, y2: 392 },
  { x1: 887, y1: 443, x2: 875, y2: 394 },
  { x1: 633, y1: 571, x2: 701, y2: 499 },
];

const Annotations = () => (
  <svg
    className="pointer-events-none absolute -left-px -top-px z-30 drop-shadow-[3px_3px_2px_rgba(0,0,0,0.5)]"
    width="1300"
    height="720"
    viewBox="0 0 1300 720"
  >
    <defs>
      <marker id="head" viewBox="-28 -9 30 18" refX="0" refY="0" markerWidth="30" markerHeight="18" markerUnits="userSpaceOnUse" orient="auto">
        <path d="M0 0L-27-7.500-22 0-27 7.500z" fill="#f00" stroke="#900" strokeWidth=".7" />
      </marker>
    </defs>
    {arrows.map((a) => {
      const len = Math.hypot(a.x2 - a.x1, a.y2 - a.y1);
      const backX = ((a.x2 - a.x1) / len) * 20;
      const backY = ((a.y2 - a.y1) / len) * 20;
      return (
        <g key={a.x1}>
          <line x1={a.x1} y1={a.y1} x2={a.x2 - backX} y2={a.y2 - backY} stroke="#900" strokeWidth="4" strokeLinecap="round" />
          <line x1={a.x1} y1={a.y1} x2={a.x2 - backX} y2={a.y2 - backY} stroke="#f00" strokeWidth="3" strokeLinecap="round" />
          <line x1={a.x1} y1={a.y1} x2={a.x2} y2={a.y2} stroke="none" markerEnd="url(#head)" />
        </g>
      );
    })}
  </svg>
);

const Pointer = () => (
  <svg className="pointer-events-none absolute left-[1009px] top-[673px] z-30" width="13" height="20" viewBox="0 0 13 20">
    <path d="M.5.8v16l3.700-3.600 2.600 5.500q1.800.3 2.200-1L6.800 12h5z" fill="#fff" stroke="#1a1a2a" />
  </svg>
);

const Watermark = () => (
  <div className="absolute bottom-[8px] right-[11px] z-10 flex items-center">
    <svg width="45" height="42" viewBox="0 0 135 126">
      <defs>
        <linearGradient id="blue" x1="0" y1="1" x2="1" y2="0">
          <stop offset="0" stopColor="#5b86cf" />
          <stop offset="1" stopColor="#6fd0ec" />
        </linearGradient>
        <linearGradient id="green" x1="0" y1="1" x2="1" y2="0">
          <stop offset="0" stopColor="#f2ec6a" />
          <stop offset=".5" stopColor="#86cf86" />
          <stop offset="1" stopColor="#5cc08c" />
        </linearGradient>
      </defs>
      <path d="M130 6Q62 6 24 42-14 78 12 98 2 68 44 38 78 16 130 6z" fill="url(#blue)" />
      <path d="M88 20Q30 40 18 72q-2 26 22 26 26 0 34-22-4-16-26-14 12 0 10 10-6 14-20 12-12-6 2-28 16-22 48-36z" fill="url(#blue)" />
      <path d="M72 48q52-2 52 26-2 28-46 44-30 10-66 4 42-4 62-24 26-26-2-50z" fill="url(#green)" />
      <path d="M118 6Q84 8 58 22q26-8 60-16z" fill="#f2d96a" />
    </svg>
    <div className="flex flex-col">
      <span className="text-[21px] font-bold leading-[22px] text-[#6fa5dc]">极光下载站</span>
      <span className="font-['Liberation_Sans',sans-serif] text-base font-bold leading-5 text-[#72c98c]">www.xz7.com</span>
    </div>
  </div>
);

const InputMethodBar = () => (
  <div className="absolute -bottom-px left-[1134px] z-10 flex items-end">
    <svg width="28" height="10" viewBox="0 0 28 10">
      <path d="M1 10V7Q12 2 25 1l3 9h-4l-2-5Q12 5 6 10z" fill="#ff6a33" />
    </svg>
    <div className="-ml-1 h-[5px] w-[202px] rounded-t-sm border border-b-0 border-[#b5cbe3] bg-white" />
  </div>
);

export default function App() {
  return (
    <div className="relative flex h-screen flex-col overflow-hidden border-l border-t border-[#808080] bg-white font-['Noto_Sans','Noto_Sans_CJK_SC',sans-serif] text-xs">
      <TitleBar />
      <Ribbon />
      <FormulaBar />
      <Sheet />
      <FormatDialog />
      <Annotations />
      <Pointer />
      <Watermark />
      <InputMethodBar />
    </div>
  );
}
